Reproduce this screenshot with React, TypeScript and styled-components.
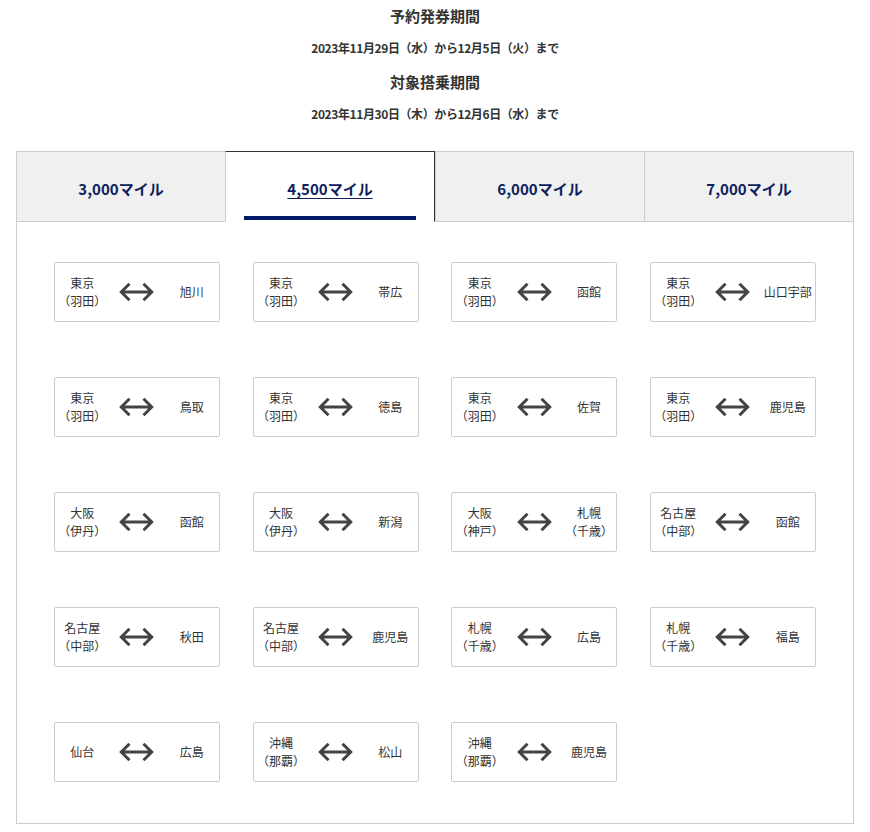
import React from 'react';
import styled, { createGlobalStyle } from 'styled-components';

const GlobalStyle = createGlobalStyle`
    body {
        margin: 0;
        background: #fff;
        color: #333;
        font-family: "Noto Sans CJK JP", "Noto Sans", sans-serif;
    }
`

const Page = styled.div`
    padding: 5px 16px 0;
`

const Periods = styled.div`
    display: flex;
    flex-direction: column;
    gap: 14px;
    text-align: center;
`

const Period = styled.div`
    display: flex;
    flex-direction: column;
    gap: 12px;
`

const Title = styled.h2`
    margin: 0;
    font-size: 15px;
    line-height: 22px;
    font-weight: bold;
`

const Dates = styled.p`
    margin: 0;
    font-size: 12px;
    line-height: 18px;
    font-weight: bold;
    letter-spacing: -0.4px;
`

const Panel = styled.div`
    margin-top: 28px;
    border: 1px solid #ccc;
`

const TabList = styled.div`
    display: flex;
`

const Tab = styled.div<{ $active?: boolean }>`
    flex: 1;
    position: relative;
    display: flex;
    align-items: center;
    justify-content: center;
    box-sizing: border-box;
    height: 70px;
    padding-top: 3px;
    background: ${p => p.$active ? '#fff' : '#f0f0f0'};
    border-bottom: 1px solid ${p => p.$active ? '#fff' : '#ccc'};
    color: #0d1f5e;
    font-size: 15px;
    font-weight: bold;
    text-decoration: ${p => p.$active ? 'underline' : 'none'};
    text-underline-offset: 3px;

    & + & {
        border-left: 1px solid #ccc;
    }

    ${p => p.$active && `
        margin-top: -1px;
        height: 71px;
        padding-top: 4px;
        border: 1px solid #333;
        border-bottom: 1px solid #fff;
        & + div { border-left: none; }

        &::after {
            content: '';
            position: absolute;
            left: 18px;
            right: 18px;
            bottom: 1px;
            height: 4px;
            background: #001a66;
        }
    `}
`

const Routes = styled.div`
    display: grid;
    grid-template-columns: repeat(4, 166px);
    justify-content: space-between;
    row-gap: 55px;
    padding: 40px 37px 41px;
`

const Card = styled.div`
    display: grid;
    grid-template-columns: 1fr 1fr 1fr;
    align-items: center;
    height: 58px;
    border: 1px solid #ccc;
    border-radius: 2px;
    font-size: 12px;
    line-height: 18px;
    color: #333;
`

const City = styled.div`
    text-align: center;
    white-space: pre;
`

const Arrow = styled.svg`
    justify-self: center;
    display: block;
`

const tabs = ['3,000マイル', '4,500マイル', '6,000マイル', '7,000マイル'];

const routes: [string, string][] = [
    ['東京\n（羽田）', '旭川'],
    ['東京\n（羽田）', '帯広'],
    ['東京\n（羽田）', '函館'],
    ['東京\n（羽田）', '山口宇部'],
    ['東京\n（羽田）', '鳥取'],
    ['東京\n（羽田）', '徳島'],
    ['東京\n（羽田）', '佐賀'],
    ['東京\n（羽田）', '鹿児島'],
    ['大阪\n（伊丹）', '函館'],
    ['大阪\n（伊丹）', '新潟'],
    ['大阪\n（神戸）', '札幌\n（千歳）'],
    ['名古屋\n（中部）', '函館'],
    ['名古屋\n（中部）', '秋田'],
    ['名古屋\n（中部）', '鹿児島'],
    ['札幌\n（千歳）', '広島'],
    ['札幌\n（千歳）', '福島'],
    ['仙台', '広島'],
    ['沖縄\n（那覇）', '松山'],
    ['沖縄\n（那覇）', '鹿児島'],
];

const BothWays = () => (
    <Arrow width="35" height="18" viewBox="0 0 35 18">
        <path d="M2 9H33M10.5 0.8L2.3 9L10.5 17.2M24.5 0.8L32.7 9L24.5 17.2" fill="none" stroke="#444" strokeWidth="3" />
    </Arrow>
)

const App = () => {
    return (
        <Page>
            <GlobalStyle />
            <Periods>
                <Period>
                    <Title>予約発券期間</Title>
                    <Dates>2023年11月29日（水）から12月5日（火）まで</Dates>
                </Period>
                <Period>
                    <Title>対象搭乗期間</Title>
                    <Dates>2023年11月30日（木）から12月6日（水）まで</Dates>
                </Period>
            </Periods>

            <Panel>
                <TabList>
                    {tabs.map((t, i) => (
                        <Tab key={t} $active={i === 1}>{t}</Tab>
                    ))}
                </TabList>
                <Routes>
                    {routes.map(([from, to], i) => (
                        <Card key={i}>
                            <City>{from}</City>
                            <BothWays />
                            <City>{to}</City>
                        </Card>
                    ))}
                </Routes>
            </Panel>
        </Page>
    )
}

export default App;
